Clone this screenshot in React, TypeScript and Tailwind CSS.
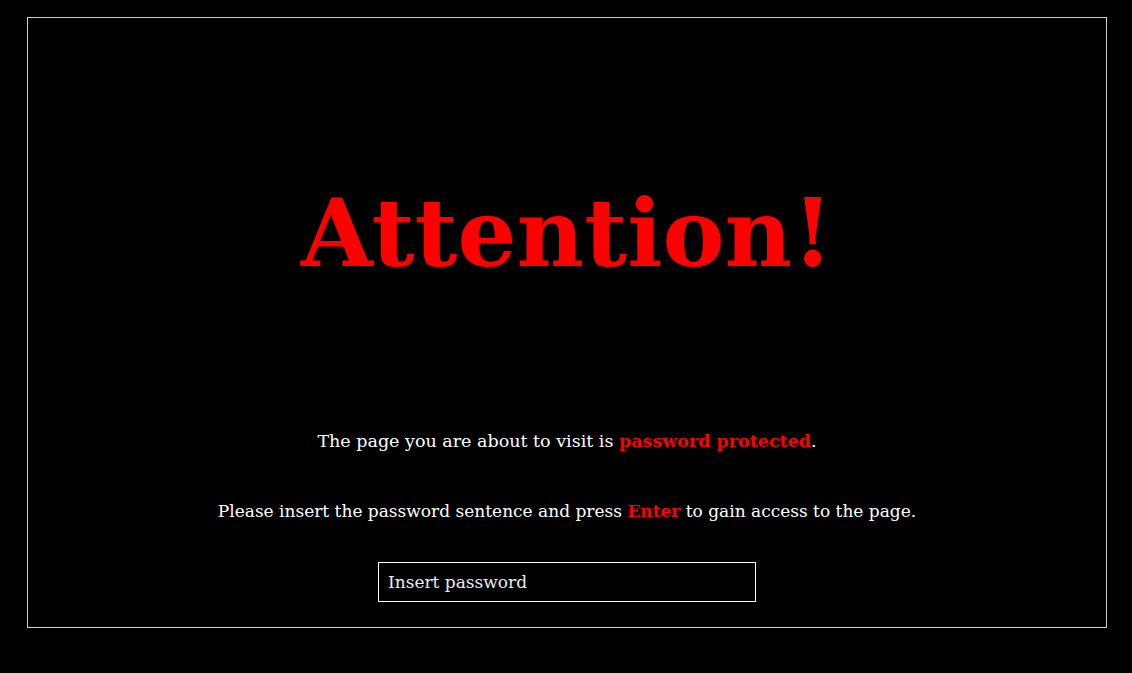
export default function App() {
  return (
    <div className="min-h-screen bg-black pt-[17px] pl-[27px] font-['DejaVu_Serif',serif]">
      <div className="w-[1080px] h-[611px] border border-[#cfcfcf] flex flex-col items-center">
        {/* Titulo */}
        <h1 className="mt-[162px] text-[93px] leading-[108px] font-bold text-[#ff0000]">
          Attention!
        </h1>

        <p className="mt-[141px] text-[17.5px] leading-[24px] text-white">
          The page you are about to visit is{" "}
          <span className="font-bold text-[#ff0000]">password protected</span>.
        </p>

        <p className="mt-[46px] text-[17px] leading-[24px] text-white">
          Please insert the password sentence and press{" "}
          <span className="font-bold text-[#ff0000]">Enter</span> to gain access to the page.
        </p>

        <input
          type="password"
          placeholder="Insert password"
          className="mt-[39px] w-[378px] h-[40px] border border-white bg-black px-[9px] text-[17px] text-white placeholder:text-[#ececec] outline-none"
        />
      </div>
    </div>
  );
}
